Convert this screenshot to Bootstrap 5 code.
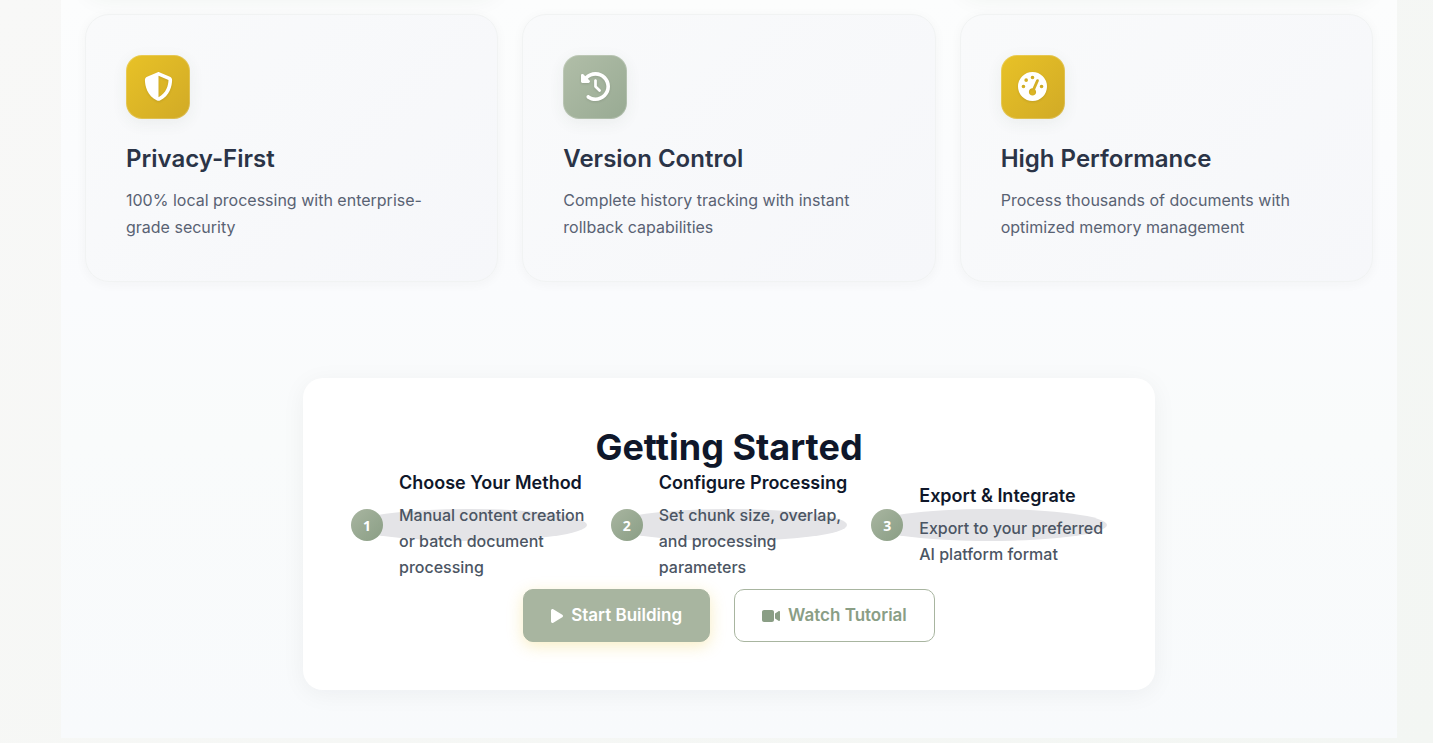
<!DOCTYPE html>
<html lang="en">
<head>
<meta charset="utf-8">
<meta name="viewport" content="width=device-width, initial-scale=1">
<title>Getting Started</title>
<link href="https://cdn.jsdelivr.net/npm/bootstrap@5.3.0/dist/css/bootstrap.min.css" rel="stylesheet">
<style>
  body { font-family: Inter, "Liberation Sans", sans-serif; background: linear-gradient(135deg, #f8f8f7, #f3f6f3); color: #0f172a; min-height: 100vh; }
  .page-panel { margin: 0 36px 5px 61px; padding: 0 24px 48px; overflow: hidden; background: linear-gradient(180deg, #fcfdfd 0, #fafbfd 40%, #f9fbfb 60%, #f8fafc 100%); }
  .feature-grid { display: grid; grid-template-columns: repeat(3, 1fr); gap: 24px; }
  .tail-row { height: 40px; margin: -50px 0 24px; }
  .tail-card { border-radius: 24px; box-shadow: 0 8px 24px rgba(40, 60, 40, .06); }
  .feature-card { padding: 40px; border: 1px solid #f1f3f3; border-radius: 24px; background: linear-gradient(135deg, #f9fafb, #f6f7fa); box-shadow: 0 2px 12px rgba(40, 60, 50, .04); }
  .feature-icon { width: 64px; height: 64px; border-radius: 16px; margin-bottom: 24px; border: 1px solid rgba(255, 255, 255, .2); box-shadow: 0 4px 16px rgba(60, 80, 60, .07); background: linear-gradient(135deg, #e8c227, #d1aa26) border-box; }
  .feature-icon.sage { background: linear-gradient(135deg, #b1bea8, #98aa93) border-box; }
  .feature-icon svg { width: 29px; height: 29px; margin-bottom: 1px; fill: #fff; filter: drop-shadow(0 1px 1px rgba(0, 0, 0, .1)); }
  .feature-card h3 { font-size: 24px; line-height: 31px; font-weight: 600; margin-bottom: 13px; color: #2b3447; }
  .feature-card p { font-size: 16px; line-height: 27px; color: #596273; margin: 0; }
  .start-card { max-width: 852px; margin: 96px auto 0; padding: 48px; border-radius: 20px; background: #fff; box-shadow: 0 4px 24px rgba(15, 23, 42, .05); }
  .start-card h2 { font-size: 36px; line-height: 43px; font-weight: 700; margin-bottom: 40px; }
  .step-list { display: grid; grid-template-columns: repeat(3, 1fr); gap: 24px; margin-bottom: 48px; }
  .step-item { height: 32px; border-radius: 50%; background: #e4e4e7; gap: 16px; }
  .step-number { width: 32px; height: 32px; font: 700 14px "Noto Sans", sans-serif; color: #fff; background: linear-gradient(135deg, #a8b5a0, #8a9e85); }
  .step-item h4 { font-size: 18px; line-height: 23px; font-weight: 600; margin-bottom: 8px; white-space: nowrap; }
  .step-item p { font-size: 16px; line-height: 26px; font-weight: 500; color: #4b5563; margin: 0; }
  .action-btn { display: inline-flex; align-items: center; gap: 8px; padding: 13px 27px; border-radius: 10px; font-size: 17px; line-height: 25px; font-weight: 600; }
  .action-btn svg { height: 16px; fill: currentColor; }
  .btn-start, .btn-start:hover { color: #fff; background: #a8b5a0; border-color: #a8b5a0; box-shadow: 0 4px 16px rgba(232, 194, 39, .28); }
  .btn-watch, .btn-watch:hover { color: #8a9e85; border-color: #a8b5a0; background: #fff; }
</style>
</head>
<body>
<main class="page-panel">
  <div class="feature-grid tail-row" aria-hidden="true">
    <div class="tail-card"></div><div></div><div class="tail-card"></div>
  </div>
  <section class="feature-grid">
    <article class="feature-card">
      <div class="feature-icon d-flex align-items-center justify-content-center">
        <svg viewBox="0 0 512 512"><path d="M256 0c4.6 0 9.2 1 13.4 2.9L457.7 82.8c22 9.3 38.4 31 38.3 57.2c-.5 99.2-41.3 280.7-213.6 363.2c-16.7 8-36.1 8-52.8 0C57.3 420.7 16.5 239.2 16 140c-.1-26.2 16.3-47.900 38.300-57.200L242.700 2.900C246.800 1 251.400 0 256 0zm0 66.800V444.800C394 378 431.100 230.100 432 141.400L256 66.800z" fill-rule="evenodd"/></svg>
      </div>
      <h3>Privacy-First</h3>
      <p>100% local processing with enterprise-grade security</p>
    </article>
    <article class="feature-card">
      <div class="feature-icon sage d-flex align-items-center justify-content-center">
        <svg viewBox="0 0 512 512"><path d="M75 75L41 41C25.900 25.900 0 36.600 0 57.900V168c0 13.300 10.700 24 24 24H134.100c21.400 0 32.100-25.900 17-41l-30.800-30.800C155 85.500 203 64 256 64c106 0 192 86 192 192s-86 192-192 192c-40.800 0-78.600-12.700-109.700-34.400c-14.500-10.100-34.400-6.600-44.600 7.900s-6.600 34.400 7.900 44.600C151.200 495 201.700 512 256 512c141.400 0 256-114.600 256-256S397.400 0 256 0C185.300 0 121.300 28.700 75 75zm181 53c-13.300 0-24 10.700-24 24V256c0 6.400 2.500 12.500 7 17l72 72c9.400 9.400 24.600 9.400 33.900 0s9.400-24.600 0-33.900l-65-65V152c0-13.300-10.700-24-24-24z"/></svg>
      </div>
      <h3>Version Control</h3>
      <p>Complete history tracking with instant rollback capabilities</p>
    </article>
    <article class="feature-card">
      <div class="feature-icon d-flex align-items-center justify-content-center">
        <svg viewBox="0 0 512 512"><path fill-rule="evenodd" d="M0 256a256 256 0 1 1 512 0A256 256 0 1 1 0 256zM288 96a32 32 0 1 0 -64 0 32 32 0 1 0 64 0zM256 416c35.300 0 64-28.700 64-64c0-17.400-6.900-33.100-18.100-44.600L366 161.700c5.300-12.100-.2-26.300-12.300-31.600s-26.300 .2-31.600 12.300L257.900 288c-.6 0-1.300 0-1.900 0c-35.300 0-64 28.700-64 64s28.700 64 64 64zM176 144a32 32 0 1 0 -64 0 32 32 0 1 0 64 0zM96 288a32 32 0 1 0 0-64 32 32 0 1 0 0 64zm352-32a32 32 0 1 0 -64 0 32 32 0 1 0 64 0z"/></svg>
      </div>
      <h3>High Performance</h3>
      <p>Process thousands of documents with optimized memory management</p>
    </article>
  </section>
  <section class="start-card">
    <h2 class="text-center">Getting Started</h2>
    <div class="step-list">
      <div class="step-item d-flex align-items-center">
        <div class="step-number rounded-circle d-flex align-items-center justify-content-center flex-shrink-0">1</div>
        <div><h4>Choose Your Method</h4><p>Manual content creation or batch document processing</p></div>
      </div>
      <div class="step-item d-flex align-items-center">
        <div class="step-number rounded-circle d-flex align-items-center justify-content-center flex-shrink-0">2</div>
        <div><h4>Configure Processing</h4><p>Set chunk size, overlap, and processing parameters</p></div>
      </div>
      <div class="step-item d-flex align-items-center">
        <div class="step-number rounded-circle d-flex align-items-center justify-content-center flex-shrink-0">3</div>
        <div><h4>Export &amp; Integrate</h4><p>Export to your preferred AI platform format</p></div>
      </div>
    </div>
    <div class="d-flex justify-content-center gap-4">
      <button type="button" class="btn action-btn btn-start"><svg viewBox="0 0 384 512"><path d="M73 39c-14.800-9.100-33.400-9.400-48.500-.9S0 62.600 0 80V432c0 17.400 9.400 33.400 24.500 41.900s33.700 8.100 48.500-.9L361 297c14.300-8.700 23-24.200 23-41s-8.700-32.200-23-41L73 39z"/></svg>Start Building</button>
      <button type="button" class="btn action-btn btn-watch"><svg viewBox="0 0 576 512"><path d="M0 128C0 92.700 28.700 64 64 64H320c35.300 0 64 28.700 64 64V384c0 35.300-28.700 64-64 64H64c-35.300 0-64-28.700-64-64V128zM559.100 99.800c10.400 5.600 16.900 16.400 16.900 28.200V384c0 11.800-6.500 22.600-16.900 28.200s-23 5-32.900-1.600l-96-64L416 337.100V320 192 174.900l14.200-9.500 96-64c9.800-6.500 22.400-7.200 32.900-1.600z"/></svg>Watch Tutorial</button>
    </div>
  </section>
</main>
<script src="https://cdn.jsdelivr.net/npm/bootstrap@5.3.0/dist/js/bootstrap.bundle.min.js"></script>
</body>
</html>
